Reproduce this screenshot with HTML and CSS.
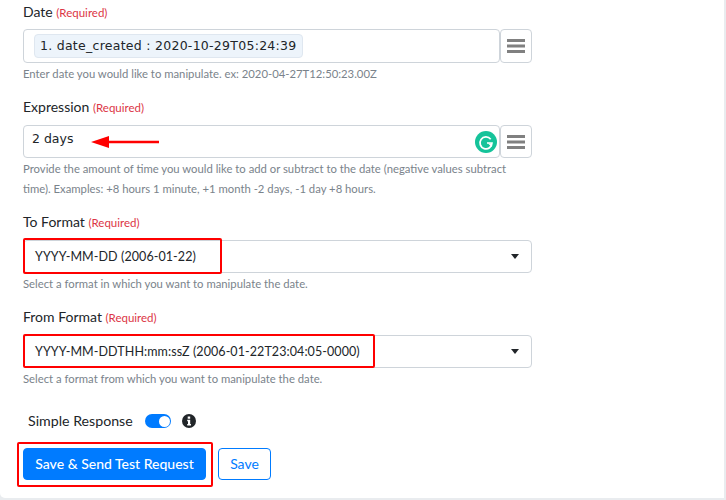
FILE: index.html
```html
<!DOCTYPE html>
<html lang="en">
<head>
<meta charset="utf-8">
<title>Date manipulation</title>
<link rel="stylesheet" href="styles.css">
</head>
<body>
<main class="card">
  <form class="form">
    <div class="field field-date">
      <label class="label">Date <span class="req">(Required)</span></label>
      <div class="input-row">
        <div class="input input-date"><span class="chip">1. date_created : 2020-10-29T05:24:39</span></div>
        <button type="button" class="menu-btn" aria-label="Menu"><svg width="18" height="14" viewBox="0 0 18 14"><path d="M0 0h18v3H0zM0 5.500h18v3H0zM0 11h18v3H0z" fill="#808080"/></svg></button>
      </div>
      <p class="help">Enter date you would like to manipulate. ex: 2020-04-27T12:50:23.00Z</p>
    </div>

    <div class="field field-expr">
      <label class="label">Expression <span class="req">(Required)</span></label>
      <div class="input-row">
        <div class="input input-expr">
          <span class="mono">2 days</span>
          <svg class="arrow" width="68" height="12" viewBox="0 0 68 12"><path d="M0 6 18 0v4.700h50v2.600H18V12z" fill="#f00"/></svg>
          <svg class="grammarly" width="22" height="22" viewBox="0 0 22 22"><circle cx="11" cy="11" r="11" fill="#15c39a"/><path d="M15.700 8.200A6 6 0 1 0 17 12h-5" fill="none" stroke="#fff" stroke-width="1.700"/><path d="M13 12.500l3.800 3.500v-3.500z" fill="#fff"/></svg>
        </div>
        <button type="button" class="menu-btn" aria-label="Menu"><svg width="18" height="14" viewBox="0 0 18 14"><path d="M0 0h18v3H0zM0 5.500h18v3H0zM0 11h18v3H0z" fill="#808080"/></svg></button>
      </div>
      <p class="help help-tall">Provide the amount of time you would like to add or subtract to the date (negative values subtract time). Examples: +8 hours 1 minute, +1 month -2 days, -1 day +8 hours.</p>
    </div>

    <div class="field field-to">
      <label class="label">To Format <span class="req">(Required)</span></label>
      <div class="select">
        <span>YYYY-MM-DD (2006-01-22)</span>
        <i class="caret"></i>
        <i class="mark mark-to"></i>
      </div>
      <p class="help">Select a format in which you want to manipulate the date.</p>
    </div>

    <div class="field field-from">
      <label class="label">From Format <span class="req">(Required)</span></label>
      <div class="select">
        <span>YYYY-MM-DDTHH:mm:ssZ (2006-01-22T23:04:05-0000)</span>
        <i class="caret"></i>
        <i class="mark mark-from"></i>
      </div>
      <p class="help">Select a format from which you want to manipulate the date.</p>
    </div>

    <div class="toggle-row">
      <span class="toggle-label">Simple Response</span>
      <span class="switch"><i></i></span>
      <svg class="info" width="14" height="14" viewBox="0 0 14 14"><circle cx="7" cy="7" r="7" fill="#212529"/><path d="M5.700 2.600h2.500v2.100H5.700zM5.200 5.800h3v4.200h.8v1.400H5.200V10h.8V7.200h-.8z" fill="#fff"/></svg>
    </div>

    <div class="actions">
      <button type="button" class="btn btn-primary">Save &amp; Send Test Request<i class="mark mark-save"></i></button>
      <button type="button" class="btn btn-outline">Save</button>
    </div>
  </form>
</main>
</body>
</html>
```
FILE: styles.css
```css
* { box-sizing: border-box; }
html, body { margin: 0; height: 500px; overflow: hidden; }
body {
  background: #e9ecef;
  font-family: "Lato", "Liberation Sans", sans-serif;
  color: #212529;
}
.card {
  width: 724px;
  height: 498px;
  background: #fff;
  border-bottom-left-radius: 5px;
  padding-left: 23px;
}
.form { width: 509px; }
.field { display: block; }
.field-date { height: 99px; padding-top: 4px; }
.field-expr { height: 115px; }
.field-to { height: 95px; }
.field-from { height: 102px; }
.label {
  display: block;
  height: 26px;
  font-size: 14px;
  line-height: 15px;
  color: #212529;
}
.field-date .label { height: 25px; }
.req { font-size: 11.500px; color: #dc3545; }
.input-row { display: flex; height: 34px; }
.input {
  position: relative;
  flex: 1;
  border: 1px solid #ced4da;
  border-radius: 4px;
  background: #fff;
}
.input-date { padding: 4px 0 0 10px; }
.input-expr { padding: 1px 0 0 8px; height: 33px; }
.chip {
  display: inline-block;
  height: 24px;
  padding: 0 5px;
  background: #edf4fb;
  border: 1px solid #dfe7f0;
  border-radius: 4px;
  font-family: "DejaVu Sans", sans-serif;
  font-size: 12.500px;
  letter-spacing: 0.27px;
  line-height: 22px;
  white-space: nowrap;
  color: #212529;
}
.mono {
  font-family: "DejaVu Sans", sans-serif;
  font-size: 12.500px;
  line-height: 20px;
  color: #212529;
}
.arrow { position: absolute; left: 67px; top: 10px; }
.grammarly { position: absolute; right: 2px; top: 5px; }
.menu-btn {
  width: 32px;
  height: 34px;
  padding: 0;
  display: flex;
  align-items: center;
  justify-content: center;
  background: #fff;
  border: 1px solid #ced4da;
  border-radius: 4px;
}
.field-expr .menu-btn { height: 33px; }
.help {
  margin: 0;
  padding-top: 3px;
  font-size: 11.300px;
  line-height: 15px;
  color: #7a838b;
}
.help-tall { line-height: 20px; padding-top: 0; padding-right: 3px; }
.select {
  position: relative;
  display: flex;
  align-items: center;
  justify-content: space-between;
  height: 33px;
  padding: 0 12px 0 11px;
  border: 1px solid #ced4da;
  border-radius: 4px;
  font-size: 12.500px;
  letter-spacing: 0.08px;
  color: #212529;
  white-space: nowrap;
}
.caret {
  width: 0;
  height: 0;
  border-left: 4.500px solid transparent;
  border-right: 4.500px solid transparent;
  border-top: 5px solid #212529;
}
.mark {
  position: absolute;
  border: 2px solid #f00;
  border-radius: 2px;
}
.mark-to { left: -1px; top: -3px; width: 199px; height: 36px; }
.mark-from { left: -1px; top: -2px; width: 352px; height: 34px; }
.toggle-row {
  display: flex;
  align-items: center;
  height: 20px;
  padding-left: 5px;
  font-size: 14.200px;
}
.toggle-label { width: 117px; padding-bottom: 2px; }
.switch {
  position: relative;
  width: 26px;
  height: 14px;
  border-radius: 7px;
  background: #007bff;
}
.switch i {
  position: absolute;
  right: 1.500px;
  top: 1.500px;
  width: 11px;
  height: 11px;
  border-radius: 50%;
  background: #fff;
}
.info { margin-left: 11px; }
.actions { display: flex; gap: 12px; margin-top: 17px; }
.btn {
  position: relative;
  height: 32px;
  font-family: inherit;
  font-size: 14px;
  border-radius: 4px;
  padding: 0 0 2px;
  border: 1px solid #007bff;
}
.btn-primary { width: 183px; background: #007bff; color: #fff; font-weight: 500; }
.btn-outline { width: 53px; background: #fff; color: #007bff; }
.mark-save { left: -7px; top: -7px; width: 196px; height: 45px; }
```
